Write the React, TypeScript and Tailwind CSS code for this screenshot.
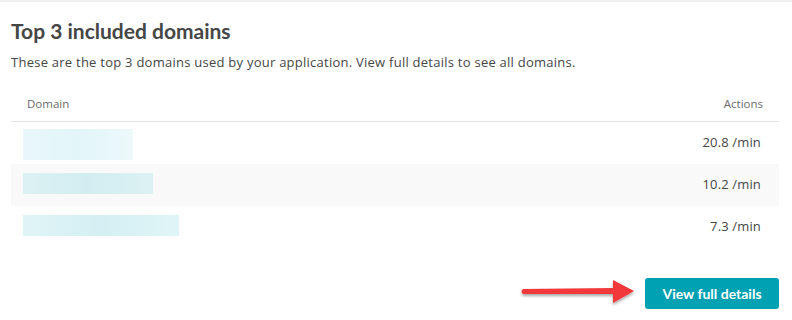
import React from 'react';

const rows = [
  { width: 'w-[110px]', color: 'from-[#e9f7fa] via-[#e2f5f8] to-[#edf9fb]', value: '20.8', striped: false, h: 'h-[31px] mt-[7px]' },
  { width: 'w-[130px]', color: 'from-[#dcf1f4] via-[#d2edf1] to-[#dcf1f4]', value: '10.2', striped: true, h: 'h-[21px] mt-[9px]' },
  { width: 'w-[156px]', color: 'from-[#e0f4f7] via-[#d4eff3] to-[#e0f5f7]', value: '7.3', striped: false, h: 'h-[21px] mt-[9px]' },
];

function Arrow() {
  return (
    <svg width="124" height="34" viewBox="0 0 124 34" className="mr-[4px]">
      <defs>
        <filter id="sh" x="-10%" y="-30%" width="130%" height="180%">
          <feDropShadow dx="0" dy="2" stdDeviation="1.5" floodColor="#000" floodOpacity="0.35" />
        </filter>
      </defs>
      <g filter="url(#sh)">
        <path d="M6 13 L96 12 L96 4 L117 15 L96 27 L96 18 L6 18 Q3 15.5 6 13 Z" fill="#f2383b" />
      </g>
    </svg>
  );
}

export default function App() {
  return (
    <div className="w-[792px] h-[320px] bg-white font-['Open_Sans',sans-serif] text-[#454646] border-t-2 border-[#efefef]">
      <div className="px-[11px]">
        <h2 className="pt-[15px] text-[21px] leading-[27px] font-['Lato',sans-serif] font-bold text-[#454646]">
          Top 3 included domains
        </h2>
        <p className="mt-[9px] text-[13px] leading-[18px] tracking-[0.25px]">
          These are the top 3 domains used by your application. View full details to see all domains.
        </p>
        <div className="mt-[20px] w-[768px]">
          <div className="flex justify-between items-center h-[31px] border-b border-[#e4e4e4] px-[16px] text-[11.5px] text-[#6b6b6b] pb-[4px]">
            <span>Domain</span>
            <span>Actions</span>
          </div>
          {rows.map((r, i) => (
            <div
              key={i}
              className={`flex justify-between items-start h-[42px] pl-[12px] pr-[18px] ${r.striped ? 'bg-[#f9f9f9]' : 'bg-white'}`}
            >
              <div className={`${r.width} ${r.h} bg-gradient-to-r ${r.color} blur-[0.6px]`} />
              <span className="text-[13px] leading-[40px] tracking-[0.15px] text-[#454646]">{r.value} /min</span>
            </div>
          ))}
        </div>
        <div className="flex justify-end items-center mt-[28px] w-[768px]">
          <Arrow />
          <button className="h-[31px] w-[134px] rounded-[3px] bg-[#00a1b2] text-white text-[14px] font-['Lato',sans-serif] font-bold">
            View full details
          </button>
        </div>
      </div>
    </div>
  );
}
